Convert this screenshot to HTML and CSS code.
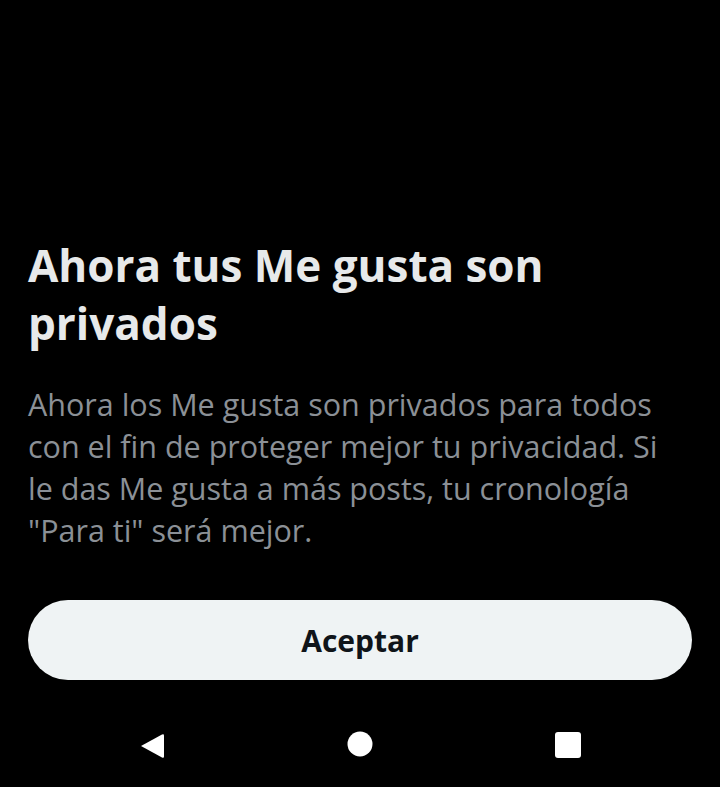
FILE: index.html
```html
<!DOCTYPE html>
<html lang="es">
<head>
  <meta charset="UTF-8">
  <meta name="viewport" content="width=device-width, initial-scale=1.0">
  <title>Me gusta privados</title>
  <link rel="stylesheet" href="styles.css">
</head>
<body>
<div class="screen">
  <div class="sheet">
    <h1 class="title">Ahora tus Me gusta son privados</h1>
    <p class="text">Ahora los Me gusta son privados para todos con el fin de proteger mejor tu privacidad. Si le das Me gusta a más posts, tu cronología "Para ti" será mejor.</p>
    <button class="btn">Aceptar</button>
  </div>
  <div class="navbar">
    <svg width="28" height="30" viewBox="0 0 28 30"><path d="M3 15 L24 3.5 Q26 2.5 26 4.5 L26 25.5 Q26 27.5 24 26.5 Z" fill="#fff"/></svg>
    <svg width="26" height="26" viewBox="0 0 26 26"><circle cx="13" cy="13" r="12.5" fill="#fff"/></svg>
    <svg width="28" height="28" viewBox="0 0 28 28"><rect x="1" y="1" width="26" height="26" rx="3" fill="#fff"/></svg>
  </div>
</div>
</body>
</html>
```

FILE: styles.css
```css
body {
  margin: 0;
  padding: 0;
  background-color: #000;
  font-family: "Open Sans", "Noto Sans", sans-serif;
}
.screen {
  height: 787px;
  display: flex;
  flex-direction: column;
  justify-content: flex-end;
}
.sheet {
  padding: 0 28px;
}
.title {
  margin: 0;
  color: #e7e9ea;
  font-size: 44px;
  line-height: 58px;
  font-weight: 700;
}
.text {
  max-width: 652px;
  margin: 31px 0 0;
  color: #8b9096;
  font-size: 30.5px;
  line-height: 42px;
}
.btn {
  display: block;
  width: 100%;
  height: 80px;
  margin-top: 49px;
  border: none;
  border-radius: 40px;
  background-color: #eff3f4;
  color: #0f1419;
  font-family: inherit;
  font-size: 30px;
  font-weight: 700;
}
.navbar {
  height: 107px;
  box-sizing: border-box;
  display: flex;
  align-items: flex-start;
  justify-content: space-between;
  padding: 51px 138px 0;
}
```
